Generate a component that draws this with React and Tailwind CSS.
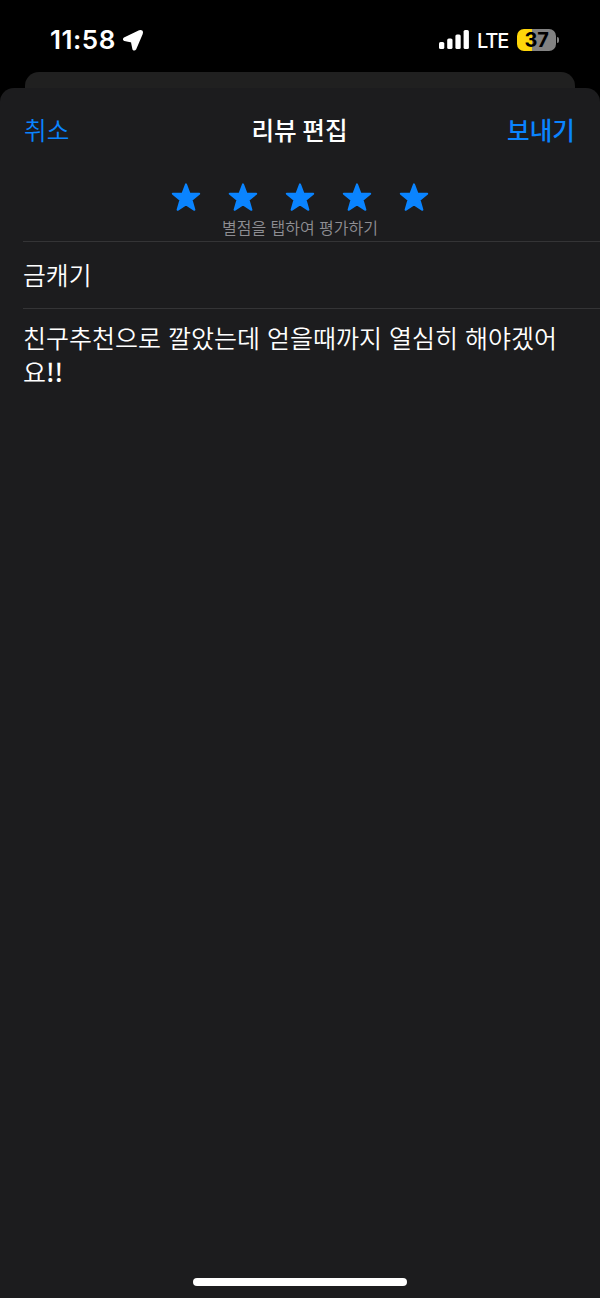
function Star() {
  return (
    <svg className="block h-[30px] w-[30px]" viewBox="0 0 30 30" fill="#0a84ff" stroke="#0a84ff" strokeWidth="2" strokeLinejoin="round">
      <path d="M15 2.4 L18.4 11.4 L28.2 11.7 L20.6 17.9 L23.4 27.8 L15 22.3 L6.6 27.8 L9.4 17.9 L1.8 11.7 L11.6 11.4 Z" />
    </svg>
  );
}

function StatusBar() {
  return (
    <header className="flex h-[72px] items-start pt-[25px] pr-[41px] pl-[50px] font-['Inter','Liberation_Sans',sans-serif] text-white">
      <span className="h-[30px] w-[66px] text-[26px] leading-[30px] font-semibold tracking-[0.5px] whitespace-nowrap">11:58</span>
      <svg className="mt-[4px] ml-[6px] h-[23px] w-[22px]" viewBox="0 0 22 23" fill="white" stroke="white" strokeWidth="2" strokeLinejoin="round">
        <path d="M19.6 2.2 Q18.8 1.6 17.5 2.2 L2.4 9.4 Q1.4 10.4 2.6 11 L9.8 12.4 L11.4 20 Q12.4 21.2 13.2 20 L19.8 4.5 Q20.4 3 19.6 2.2 Z" />
      </svg>
      <svg className="mt-[4px] ml-auto h-[21px] w-[32px]" viewBox="0 0 32 21" fill="white">
        <rect x="0" y="13" width="5.3" height="7" rx="1.6" />
        <rect x="8.2" y="9.5" width="5.3" height="10.5" rx="1.6" />
        <rect x="16.4" y="5.5" width="5.3" height="14.5" rx="1.6" />
        <rect x="24.6" y="1" width="5.3" height="19" rx="1.6" />
      </svg>
      <span className="ml-[6px] w-[32px] pt-[1px] text-[20px] leading-[30px] font-medium tracking-[-1.1px]">LTE</span>
      <div className="mt-[4px] ml-[8px] flex h-[22px] w-[39px] items-center justify-center rounded-[7px] bg-[linear-gradient(90deg,#ffd60a_0,#ffd60a_15px,#828282_15px)] text-[20px] leading-[22px] font-bold tracking-[-0.2px] text-black">
        37
      </div>
      <div className="mt-[12px] ml-[1px] h-[6px] w-[2px] rounded-r-full bg-[#828282]" />
    </header>
  );
}

export default function App() {
  return (
    <div className="flex h-[1298px] w-[600px] flex-col overflow-hidden bg-black font-['Noto_Sans_CJK_KR',sans-serif] text-white">
      <StatusBar />
      <div className="mx-[25px] -mb-[16px] h-[32px] shrink-0 rounded-t-[14px] bg-[#202020]" />
      <main className="flex flex-1 flex-col rounded-t-[14px] bg-[#1c1c1e]">
        <nav className="grid h-[82px] grid-cols-3 items-center pr-[25px] pl-[24px] text-[24.6px] leading-[34px]">
          <button className="text-left font-[350] text-[#0a84ff]">취소</button>
          <h1 className="text-center font-medium">리뷰 편집</h1>
          <button className="text-right font-medium text-[#0a84ff]">보내기</button>
        </nav>
        <section className="flex h-[71px] flex-col items-center pt-[12px]">
          <div className="flex gap-[27px]">
            <Star />
            <Star />
            <Star />
            <Star />
            <Star />
          </div>
          <p className="mt-[3px] text-[16px] leading-[24px] font-[350] text-[#8e8e93] [word-spacing:0.8px]">별점을 탭하여 평가하기</p>
        </section>
        <div className="ml-[23px] h-[68px] border-y border-[#343436] pt-[15px] text-[24.8px] leading-[34px] font-[350]">금캐기</div>
        <p className="ml-[23px] pt-[11px] text-[25px] leading-[34px] font-[350] [word-spacing:1.4px]">
          친구추천으로 깔았는데 얻을때까지 열심히 해야겠어
          <br />
          요<span className="font-medium">!!</span>
        </p>
        <div className="mx-auto mt-auto mb-[12px] h-[8px] w-[214px] rounded-full bg-white" />
      </main>
    </div>
  );
}
